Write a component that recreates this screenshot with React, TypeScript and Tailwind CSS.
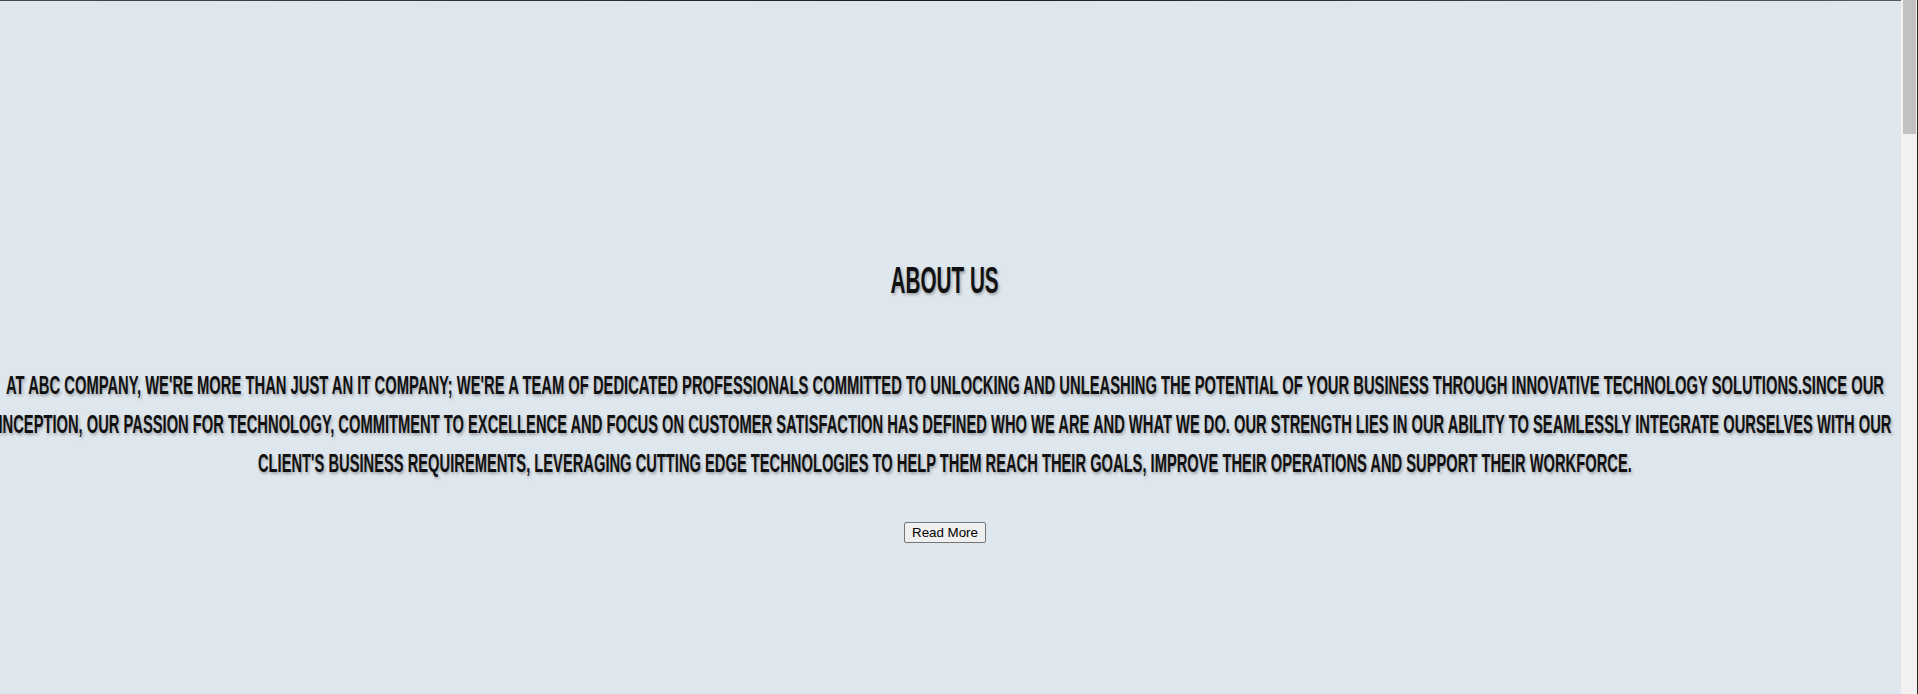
import React, { useLayoutEffect, useRef, useState } from 'react';

const lines = [
  "At ABC Company, we're more than just an IT company; we're a team of dedicated professionals committed to unlocking and unleashing the potential of your business through innovative technology solutions.Since our",
  "inception, our passion for technology, commitment to excellence and focus on customer satisfaction has defined who we are and what we do. Our strength lies in our ability to seamlessly integrate ourselves with our",
  "client's business requirements, leveraging cutting edge technologies to help them reach their goals, improve their operations and support their workforce.",
];

// squeeze a line horizontally so a plain bold face reads like the condensed display face
const Squeezed: React.FC<{ text: string; target: number; className?: string }> = ({ text, target, className }) => {
  const ref = useRef<HTMLSpanElement>(null);
  const [k, setK] = useState(1);
  useLayoutEffect(() => {
    if (ref.current) {
      const w = ref.current.offsetWidth;
      if (w > 0) setK(target / w);
    }
  }, [text, target]);
  return (
    <span ref={ref} className={`inline-block whitespace-nowrap shrink-0 ${className ?? ''}`} style={{ transform: `scaleX(${k})` }}>
      {text}
    </span>
  );
};

const Scrollbar: React.FC = () => (
  <div className="w-[17px] shrink-0 h-full bg-[#f1f1f1] border-r border-[#2a2a2a] pl-[2px]">
    <div className="w-[13px] h-[134px] bg-[#c1c1c1]" />
  </div>
);

export default function App() {
  return (
    <div className="flex h-[694px] w-[1918px] overflow-hidden bg-[#dfe7ee]">
      <div className="flex-1 min-w-0 flex flex-col overflow-hidden">
        {/* bottom edge of the hero image above */}
        <div className="h-[1px] w-full bg-gradient-to-r from-[#4a4a4a] via-[#1c1c1c] to-[#5a5a5a]" />
        <section className="flex flex-col items-center pt-[258px] pr-[11px] font-['Liberation_Sans',Arial,sans-serif] uppercase font-bold text-[#111] [text-shadow:2px_2px_4px_rgba(0,0,0,0.3)]">
          <h2 className="text-[37px] leading-[44px]">
            <Squeezed text="About Us" target={108} />
          </h2>
          <div className="mt-[63px] flex flex-col items-center text-[25px] leading-[39px]">
            <Squeezed text={lines[0]} target={1878} />
            <Squeezed text={lines[1]} target={1893} />
            <Squeezed text={lines[2]} target={1374} />
          </div>
          <button className="mt-[39px] px-[7px] h-[21px] text-[13.33px] leading-none font-normal normal-case [text-shadow:none] font-['Liberation_Sans',Arial,sans-serif] text-black bg-[#efefef] border border-[#767676] rounded-[2px]">
            Read More
          </button>
        </section>
      </div>
      <Scrollbar />
    </div>
  );
}
